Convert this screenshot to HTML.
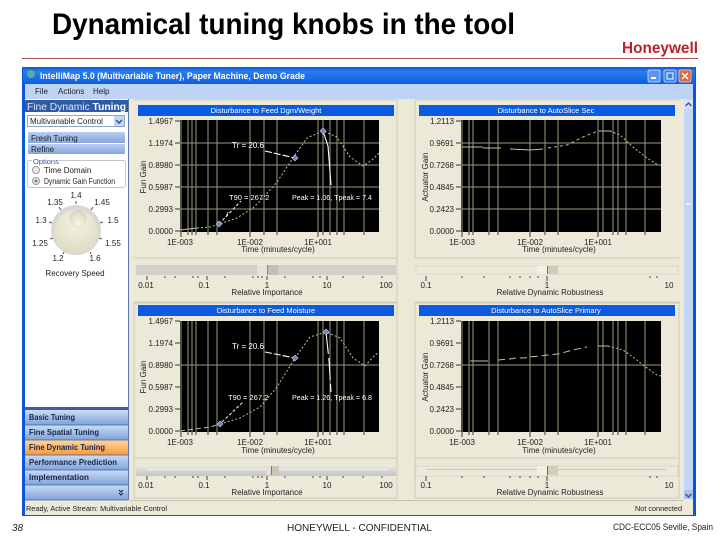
<!DOCTYPE html>
<html><head><meta charset="utf-8"><style>
html,body{margin:0;padding:0;background:#fff}
svg{display:block;font-family:"Liberation Sans",sans-serif}
.s{font-size:8px;fill:#222}
.w{font-size:8px;fill:#fff}
.e{text-anchor:end}.m{text-anchor:middle}
.soft{filter:blur(.35px)}
</style></head><body>
<svg width="720" height="540" viewBox="0 0 720 540" xmlns="http://www.w3.org/2000/svg">
<defs>
<linearGradient id="tb" x1="0" y1="0" x2="0" y2="1"><stop offset="0" stop-color="#0a57d6"/><stop offset=".25" stop-color="#2a7cf0"/><stop offset="1" stop-color="#0d5fe0"/></linearGradient>
<linearGradient id="nav" x1="0" y1="0" x2="0" y2="1"><stop offset="0" stop-color="#cbdcf5"/><stop offset="1" stop-color="#7fa3da"/></linearGradient>
<linearGradient id="or" x1="0" y1="0" x2="0" y2="1"><stop offset="0" stop-color="#fdd6a0"/><stop offset="1" stop-color="#f89a3c"/></linearGradient>
<linearGradient id="btn" x1="0" y1="0" x2="0" y2="1"><stop offset="0" stop-color="#b9cdf0"/><stop offset="1" stop-color="#86a6dc"/></linearGradient>
<linearGradient id="sl" x1="0" y1="0" x2="0" y2="1"><stop offset="0" stop-color="#e6e6e2"/><stop offset="1" stop-color="#c4c4c0"/></linearGradient>
<radialGradient id="kn" cx=".5" cy=".3" r=".7"><stop offset="0" stop-color="#f4f3e4"/><stop offset="1" stop-color="#dedbc0"/></radialGradient>
<radialGradient id="kh" cx=".5" cy=".7" r=".7"><stop offset="0" stop-color="#f7f6ea"/><stop offset="1" stop-color="#d6d3b8"/></radialGradient>
</defs>

<text x="52" y="34" font-size="29.5" font-weight="bold" fill="#000" textLength="463" lengthAdjust="spacingAndGlyphs">Dynamical tuning knobs in the tool</text>
<text x="622" y="53" font-size="16" font-weight="bold" fill="#b8232b" textLength="76" lengthAdjust="spacingAndGlyphs">Honeywell</text>
<rect x="22" y="58" width="676" height="1" fill="#a8504c"/>

<!-- window -->
<rect x="22" y="67" width="674" height="449" fill="#0a55d8"/>
<rect x="23" y="67" width="672" height="17" fill="url(#tb)"/>
<rect x="25" y="84" width="668" height="15" fill="#bdd4f5"/>
<rect x="25" y="99" width="668" height="416" fill="#ece9d8"/>
<circle cx="31" cy="74" r="4" fill="#4fb0a0"/>
<text class="soft" x="40" y="79" font-size="9" font-weight="bold" fill="#fff" textLength="265" lengthAdjust="spacingAndGlyphs">IntelliMap 5.0 (Multivariable Tuner), Paper Machine, Demo Grade</text>
<rect x="648" y="70" width="12" height="12" rx="1.5" fill="#5b93ee" stroke="#dce8fb" stroke-width=".7"/><rect x="651" y="77" width="5" height="2" fill="#fff"/>
<rect x="664" y="70" width="12" height="12" rx="1.5" fill="#3f80e8" stroke="#dce8fb" stroke-width=".7"/><rect x="667" y="73" width="6" height="6" fill="none" stroke="#fff"/>
<rect x="679" y="70" width="12" height="12" rx="1.5" fill="#dd6a3a" stroke="#f3d6c8" stroke-width=".7"/><path d="M682 73l6 6m0-6l-6 6" stroke="#fff" stroke-width="1.5"/>
<g class="soft s"><text x="35" y="94">File</text><text x="58" y="94">Actions</text><text x="93" y="94">Help</text></g>

<!-- left panel -->
<rect x="25" y="99" width="103" height="401" fill="#fff"/>
<rect x="128" y="99" width="1" height="401" fill="#5a78a8"/>
<rect x="25" y="100" width="103" height="12" fill="#2f5aa6"/>
<text class="soft" x="27" y="110" font-size="10" fill="#dfe8f8" textLength="99" lengthAdjust="spacingAndGlyphs">Fine Dynamic <tspan font-weight="bold" fill="#fff">Tuning</tspan></text>
<rect x="27.5" y="115.5" width="97" height="11" fill="#fff" stroke="#8fa6c8"/>
<rect x="114" y="116" width="10" height="10" fill="#c4d5f2"/><path d="M116 120l3 3 3-3" fill="none" stroke="#2c4f90" stroke-width="1.4"/>
<text class="soft s" x="30" y="124">Multivariable Control</text>
<rect x="28" y="132" width="97" height="11" fill="url(#btn)"/><rect x="28" y="144" width="97" height="10" fill="url(#btn)"/>
<g class="soft s"><text x="31" y="141">Fresh Tuning</text><text x="31" y="152">Refine</text></g>
<rect x="27.5" y="160.5" width="98" height="27" rx="2" fill="#fff" stroke="#c8c8c0"/>
<rect x="32" y="157" width="27" height="7" fill="#fff"/>
<text class="soft" x="33" y="164" font-size="7.5" fill="#3a50a0">Options</text>
<circle cx="36" cy="170" r="3.5" fill="#eee" stroke="#999"/><circle cx="36" cy="181" r="3.5" fill="#eee" stroke="#999"/><circle cx="36" cy="181" r="1.5" fill="#4a9a4a"/>
<g class="soft s"><text x="44" y="173">Time Domain</text><text x="44" y="184" textLength="71" lengthAdjust="spacingAndGlyphs">Dynamic Gain Function</text></g>

<circle cx="76" cy="230" r="25" fill="#d8d8d4"/>
<circle cx="76" cy="232" r="22" fill="url(#kn)"/>
<circle cx="78" cy="219" r="9" fill="url(#kh)"/>
<path d="M76 201v3M59 207l2 3M93 207l-2 3M49 222l3 1M103 222l-3 1M50 239l3-1M102 239l-3-1M64 252l-1 2M90 252l1 2" stroke="#555"/>
<g class="soft s m"><text x="76" y="198">1.4</text><text x="55" y="205">1.35</text><text x="102" y="205">1.45</text><text x="41" y="223">1.3</text><text x="113" y="223">1.5</text><text x="40" y="246">1.25</text><text x="113" y="246">1.55</text><text x="58" y="261">1.2</text><text x="95" y="261">1.6</text><text x="75" y="276">Recovery Speed</text></g>

<!-- nav -->
<rect x="25" y="407" width="103" height="3" fill="#3a5f9e"/>
<rect x="25" y="410" width="103" height="15" fill="url(#nav)"/>
<rect x="25" y="425" width="103" height="15" fill="url(#nav)"/>
<rect x="25" y="440" width="103" height="15" fill="url(#or)"/>
<rect x="25" y="455" width="103" height="15" fill="url(#nav)"/>
<rect x="25" y="470" width="103" height="15" fill="url(#nav)"/>
<rect x="25" y="485" width="103" height="15" fill="url(#nav)"/>
<path d="M25 425h103M25 440h103M25 455h103M25 470h103M25 485h103M25 500h103" stroke="#3a5f9e" stroke-width=".7"/>
<path d="M119 490l2 2 2-2M119 493l2 2 2-2" fill="none" stroke="#222"/>
<g class="soft" font-size="8" font-weight="bold" fill="#14264a">
<text x="29" y="420" textLength="46" lengthAdjust="spacingAndGlyphs">Basic Tuning</text><text x="29" y="435" textLength="70" lengthAdjust="spacingAndGlyphs">Fine Spatial Tuning</text><text x="29" y="450" textLength="76" lengthAdjust="spacingAndGlyphs">Fine Dynamic Tuning</text><text x="29" y="465" textLength="88" lengthAdjust="spacingAndGlyphs">Performance Prediction</text><text x="29" y="480" textLength="60" lengthAdjust="spacingAndGlyphs">Implementation</text></g>
<text class="soft" x="26" y="511" font-size="7.5" fill="#222" textLength="141" lengthAdjust="spacingAndGlyphs">Ready, Active Stream: Multivariable Control</text>
<text class="soft" x="635" y="511" font-size="7.5" fill="#222" textLength="47" lengthAdjust="spacingAndGlyphs">Not connected</text>

<!-- panel frames -->
<g fill="none" stroke="#cdcab8">
<path d="M134 100H397M134 258H397M134 302H397M397 100V302"/>
<path d="M415 100H679M415 258H679M415 302H679M415 100V258"/>
<path d="M134 303H397V498H134ZM134 458H397"/>
<path d="M415 303H679V498H415ZM415 458H679"/>
</g>
<rect x="129" y="500" width="554" height="1" fill="#c6c3b0"/>

<!-- scrollbar -->
<rect x="684" y="99" width="9" height="400" fill="#c3d6f6"/>
<rect x="684" y="99" width="9" height="10" fill="#d4e1f8"/><path d="M685.5 106l3-3 3 3" fill="none" stroke="#33508c" stroke-width="1.3"/>
<rect x="684" y="490" width="9" height="9" fill="#a9c2ee"/><path d="M685.5 494l3 3 3-3" fill="none" stroke="#33508c" stroke-width="1.3"/>
<rect x="686" y="203" width="5" height="2" fill="#eef3fb"/>

<!-- chart title bars -->
<rect x="138" y="105" width="256" height="11" fill="#0a5be2"/>
<rect x="419" y="105" width="256" height="11" fill="#0a5be2"/>
<rect x="138" y="305" width="256" height="11" fill="#0a5be2"/>
<rect x="419" y="305" width="256" height="11" fill="#0a5be2"/>
<g class="soft w m" font-size="7.5">
<text x="266" y="113" font-size="7.5">Disturbance to Feed Dgm/Weight</text>
<text x="546" y="113" font-size="7.5">Disturbance to AutoSlice Sec</text>
<text x="266" y="313" font-size="7.5">Disturbance to Feed Moisture</text>
<text x="546" y="313" font-size="7.5">Disturbance to AutoSlice Primary</text></g>

<!-- plots -->
<rect x="180" y="120" width="199" height="112" fill="#000"/>
<rect x="461" y="120" width="200" height="112" fill="#000"/>
<rect x="180" y="321" width="199" height="111" fill="#000"/>
<rect x="461" y="321" width="200" height="111" fill="#000"/>

<g stroke="#949c78" fill="none">
<path d="M181 120v112M188 120v112M192 120v112M196 120v112M208 120v112M217 120v112M250 120v112M264 120v112M277 120v112M318 120v112M323 120v112M330 120v112M337 120v112M344 120v112M364 120v112"/>
<path d="M180 143h199M180 165h199M180 187h199M180 209h199"/>
<path d="M462 120v112M469 120v112M473 120v112M489 120v112M498 120v112M530 120v112M545 120v112M558 120v112M598 120v112M603 120v112M613 120v112M618 120v112M626 120v112M645 120v112"/>
<path d="M461 143h200M461 165h200M461 187h200M461 209h200"/>
<path d="M181 321v111M188 321v111M192 321v111M196 321v111M208 321v111M217 321v111M250 321v111M264 321v111M277 321v111M318 321v111M323 321v111M330 321v111M337 321v111M344 321v111M364 321v111"/>
<path d="M180 365h199"/>
<path d="M462 321v111M469 321v111M473 321v111M489 321v111M498 321v111M530 321v111M545 321v111M558 321v111M598 321v111M603 321v111M613 321v111M618 321v111M626 321v111M645 321v111"/>
<path d="M461 365h200"/>
</g>

<!-- axis ticks -->
<g stroke="#333" fill="none">
<path d="M175 121h5M175 143h5M175 165h5M175 187h5M175 209h5M175 231h5M456 121h5M456 143h5M456 165h5M456 187h5M456 209h5M456 231h5M175 321h5M175 343h5M175 365h5M175 387h5M175 409h5M175 431h5M456 321h5M456 343h5M456 365h5M456 387h5M456 409h5M456 431h5"/>
<path d="M181 232v5M188 232v3M192 232v3M196 232v3M208 232v3M217 232v3M250 232v5M264 232v3M277 232v3M318 232v5M323 232v3M330 232v3M337 232v3M344 232v3M364 232v3"/>
<path d="M462 232v5M469 232v3M473 232v3M489 232v3M498 232v3M530 232v5M545 232v3M558 232v3M598 232v5M613 232v3M618 232v3M626 232v3M645 232v3"/>
<path d="M181 432v5M188 432v3M192 432v3M196 432v3M208 432v3M217 432v3M250 432v5M264 432v3M277 432v3M318 432v5M323 432v3M330 432v3M337 432v3M344 432v3M364 432v3"/>
<path d="M462 432v5M469 432v3M473 432v3M489 432v3M498 432v3M530 432v5M545 432v3M558 432v3M598 432v5M613 432v3M618 432v3M626 432v3M645 432v3"/>
</g>

<!-- curves -->
<g fill="none" stroke="#b7c69e" stroke-linejoin="round">
<path d="M180 230L197 228" />
<path stroke-dasharray="2 2" d="M197 228L210 227L219 224L237 218L253 208L263 198L277 182L293 158L307 138L323 131L337 137L350 157L363 166L372 160L379 153"/>
<path d="M462 147L483 147M483 148L501 148M510 149L530 150L543 149"/>
<path stroke-dasharray="3 3" d="M548 148L567 145L583 137L598 131"/>
<path d="M598 131L610 131"/>
<path stroke-dasharray="2 2" d="M610 131L620 135L633 147L647 158L658 165L661 165"/>
<path stroke-dasharray="5 3" d="M180 431L210 427L220 424"/>
<path stroke-dasharray="2 2" d="M220 424L240 418L260 407L277 387L295 358L310 337L326 332L340 338L353 358L365 366L373 357L379 352"/>
<path d="M470 361L488 361"/>
<path stroke-dasharray="7 4" d="M498 360L510 359L516 358L525 358L528 357L540 356L548 355L558 354L573 350L587 347"/>
<path d="M598 346L608 346"/>
<path stroke-dasharray="2 2" d="M608 346L623 350L633 357L647 368L657 375L661 376"/>
</g>

<!-- annotations -->
<g fill="none" stroke="#fff">
<path stroke-width="1.1" stroke-dasharray="7 2" d="M265 151L295 158"/>
<path stroke-width="1.1" d="M323 131L328 146L331 185"/>
<path stroke-width="1" stroke-dasharray="3 2" d="M219 224L241 201"/>
<path stroke-width=".8" d="M226 217L228 212"/>
<path stroke-width="1.1" stroke-dasharray="7 2" d="M265 352L295 358"/>
<path stroke-width="1.1" stroke-dasharray="22 4" d="M326 332L329 360L331 392"/>
<path stroke-width="1" stroke-dasharray="3 2" d="M222 422L243 402"/>
</g>
<g fill="#6f84b8" stroke="#c8d0e4" stroke-width=".6">
<path d="M219 221l3 3-3 3-3-3zM295 155l3 3-3 3-3-3zM323 128l3 3-3 3-3-3zM220 421l3 3-3 3-3-3zM295 355l3 3-3 3-3-3zM326 329l3 3-3 3-3-3z"/>
</g>
<g class="soft w">
<text x="232" y="148">Tr = 20.6</text><text x="229" y="200" font-size="7.5">T90 = 267.2</text><text x="292" y="200" font-size="7.5" textLength="80" lengthAdjust="spacingAndGlyphs">Peak = 1.06, Tpeak = 7.4</text>
<text x="232" y="349">Tr = 20.6</text><text x="228" y="400" font-size="7.5">T90 = 267.2</text><text x="292" y="400" font-size="7.5" textLength="80" lengthAdjust="spacingAndGlyphs">Peak = 1.26, Tpeak = 6.8</text>
</g>

<!-- axis labels -->
<g class="soft s e">
<text x="173" y="124">1.4967</text><text x="173" y="146">1.1974</text><text x="173" y="168">0.8980</text><text x="173" y="190">0.5987</text><text x="173" y="212">0.2993</text><text x="173" y="234">0.0000</text>
<text x="454" y="124">1.2113</text><text x="454" y="146">0.9691</text><text x="454" y="168">0.7268</text><text x="454" y="190">0.4845</text><text x="454" y="212">0.2423</text><text x="454" y="234">0.0000</text>
<text x="173" y="324">1.4967</text><text x="173" y="346">1.1974</text><text x="173" y="368">0.8980</text><text x="173" y="390">0.5987</text><text x="173" y="412">0.2993</text><text x="173" y="434">0.0000</text>
<text x="454" y="324">1.2113</text><text x="454" y="346">0.9691</text><text x="454" y="368">0.7268</text><text x="454" y="390">0.4845</text><text x="454" y="412">0.2423</text><text x="454" y="434">0.0000</text>
</g>
<g class="soft s m">
<text x="180" y="245">1E-003</text><text x="250" y="245">1E-002</text><text x="318" y="245">1E+001</text><text x="278" y="252">Time (minutes/cycle)</text>
<text x="462" y="245">1E-003</text><text x="530" y="245">1E-002</text><text x="598" y="245">1E+001</text><text x="559" y="252">Time (minutes/cycle)</text>
<text x="180" y="445">1E-003</text><text x="250" y="445">1E-002</text><text x="318" y="445">1E+001</text><text x="278" y="453">Time (minutes/cycle)</text>
<text x="462" y="445">1E-003</text><text x="530" y="445">1E-002</text><text x="598" y="445">1E+001</text><text x="559" y="453">Time (minutes/cycle)</text>
<text transform="translate(146,177) rotate(-90)">Fun Gain</text>
<text transform="translate(428,177) rotate(-90)">Actuator Gain</text>
<text transform="translate(146,377) rotate(-90)">Fun Gain</text>
<text transform="translate(428,377) rotate(-90)">Actuator Gain</text>
</g>

<!-- sliders -->
<rect x="136" y="265" width="260" height="10" fill="#cfcfcb"/>
<rect x="257" y="265" width="11" height="10" fill="#e4e3dc"/><rect x="267" y="265" width="1" height="10" fill="#888"/><rect x="268" y="265" width="10" height="10" fill="#c2c0b2"/>
<rect x="416" y="266" width="262" height="8" fill="#ece9d8" stroke="#d8d6c8"/>
<rect x="537" y="266" width="11" height="8" fill="#f2f1e8"/><rect x="547" y="266" width="1" height="8" fill="#777"/><rect x="548" y="266" width="10" height="8" fill="#cfccb9"/>
<rect x="136" y="466" width="260" height="10" fill="url(#sl)"/><rect x="147" y="469" width="240" height="1" fill="#f2f2f0"/>
<rect x="266" y="466" width="11" height="9" fill="#e2e1d8"/><rect x="271" y="466" width="1" height="9" fill="#777"/><rect x="272" y="466" width="7" height="9" fill="#c8c6b8"/>
<rect x="416" y="466" width="262" height="10" fill="#ece9d8" stroke="#d8d6c8"/><rect x="426" y="469" width="240" height="1" fill="#c8c8c0"/>
<rect x="537" y="466" width="11" height="9" fill="#f2f1e8"/><rect x="547" y="466" width="1" height="9" fill="#666"/><rect x="548" y="466" width="10" height="9" fill="#d0cdb9"/>
<g stroke="#444" fill="none">
<path d="M147 276v4M165 276v2M175 276v2M193 276v2M198 276v2M207 276v4M225 276v2M253 276v2M258 276v2M262 276v2M267 276v4M285 276v2M313 276v2M320 276v2M327 276v4M343 276v2M363 276v2M382 276v2"/>
<path d="M426 276v5M462 276v2M484 276v2M510 276v2M520 276v2M530 276v2M538 276v2M547 276v5M650 276v2M657 276v2"/>
<path d="M147 476v4M165 476v2M175 476v2M193 476v2M198 476v2M207 476v4M225 476v2M253 476v2M258 476v2M262 476v2M267 476v4M285 476v2M313 476v2M320 476v2M327 476v4M343 476v2M363 476v2M382 476v2"/>
<path d="M426 476v5M462 476v2M484 476v2M510 476v2M520 476v2M530 476v2M538 476v2M547 476v5M650 476v2M657 476v2"/>
</g>
<g class="soft s m">
<text x="146" y="288">0.01</text><text x="204" y="288">0.1</text><text x="267" y="288">1</text><text x="327" y="288">10</text><text x="386" y="288">100</text><text x="267" y="295">Relative Importance</text>
<text x="426" y="288">0.1</text><text x="547" y="288">1</text><text x="669" y="288">10</text><text x="550" y="295">Relative Dynamic Robustness</text>
<text x="146" y="488">0.01</text><text x="204" y="488">0.1</text><text x="267" y="488">1</text><text x="327" y="488">10</text><text x="386" y="488">100</text><text x="267" y="495">Relative Importance</text>
<text x="426" y="488">0.1</text><text x="547" y="488">1</text><text x="669" y="488">10</text><text x="550" y="495">Relative Dynamic Robustness</text>
</g>

<!-- footer -->
<text x="12" y="531" font-size="10" font-style="italic" fill="#222">38</text>
<text x="287" y="531" font-size="10" fill="#222" textLength="145" lengthAdjust="spacingAndGlyphs">HONEYWELL - CONFIDENTIAL</text>
<text x="613" y="530" font-size="8.8" fill="#222" textLength="100" lengthAdjust="spacingAndGlyphs">CDC-ECC05 Seville, Spain</text>
</svg>
</body></html>
